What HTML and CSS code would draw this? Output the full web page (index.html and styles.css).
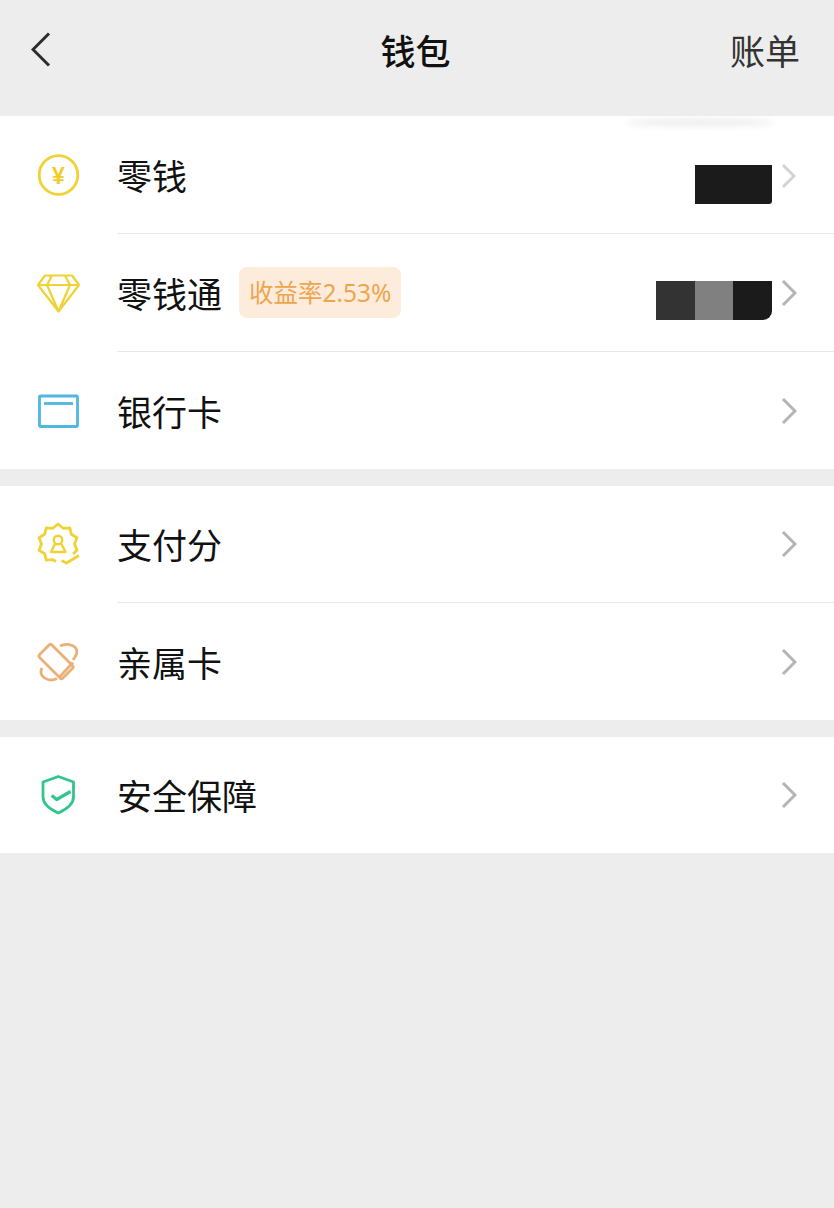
FILE: index.html
```html
<!DOCTYPE html>
<html lang="zh-CN">
<head>
    <meta charset="UTF-8">
    <meta name="viewport" content="width=device-width, initial-scale=1.0">
    <title>钱包</title>
    <link rel="stylesheet" href="styles.css">
</head>
<body>
    <header class="topbar">
        <svg class="back" width="20" height="36" viewBox="0 0 20 36"><path d="M18 1.500 2 17.500l16 16"/></svg>
        <h1 class="title">钱包</h1>
        <span class="bills">账单</span>
    </header>

    <section class="group group-wallet">
        <div class="smudge"></div>
        <div class="row">
            <svg class="icon" width="42" height="42" viewBox="0 0 42 42">
                <circle class="yellow" cx="21.500" cy="21" r="19.300"/>
                <text class="yen" x="21.500" y="29.500" text-anchor="middle">¥</text>
            </svg>
            <div class="row-body">
                <span class="label">零钱</span>
                <div class="mask mask-change">
                    <i class="cell c-dark"></i><i class="cell c-dark nick"></i>
                </div>
                <svg class="chevron faint" width="16" height="28" viewBox="0 0 16 28"><path d="M2 3l11 11L2 25"/></svg>
            </div>
        </div>
        <div class="row">
            <svg class="icon" width="42" height="42" viewBox="0 0 42 42">
                <path class="yellow fine" d="M8 3.500H35L42 13 21.500 39.500 1 13zM1 13H42M15 3.500 10 13 21.500 39.500 33 13 28 3.500"/>
            </svg>
            <div class="row-body">
                <span class="label">零钱通</span>
                <span class="badge">收益率2.53%</span>
                <div class="mask mask-fund">
                    <i class="cell c-mid"></i><i class="cell c-grey"></i><i class="cell c-dark fade"></i>
                </div>
                <svg class="chevron" width="16" height="28" viewBox="0 0 16 28"><path d="M2 2l12 12L2 26"/></svg>
            </div>
        </div>
        <div class="row">
            <svg class="icon" width="42" height="42" viewBox="0 0 42 42">
                <rect class="blue" x="2.500" y="6" width="38" height="30.500" rx="1"/>
                <path class="blue" d="M7 13.500H36"/>
            </svg>
            <div class="row-body no-line">
                <span class="label">银行卡</span>
                <svg class="chevron push" width="16" height="28" viewBox="0 0 16 28"><path d="M2 2l12 12L2 26"/></svg>
            </div>
        </div>
    </section>

    <section class="group group-pay">
        <div class="row">
            <svg class="icon icon-up" width="42" height="42" viewBox="0 0 42 42">
                <path class="yellow" d="M19 38.500 15.900 36.700 9.200 37.200 7.700 30.700 2 27.200 4.500 21 2 14.800 7.700 11.300 9.200 4.800 15.900 5.300 21 1 26.100 5.300 32.800 4.800 34.300 11.300 40 14.800 37.500 21 40 27.200 36 31"/>
                <path class="yellow" d="M24.500 37.500 29.500 40 42 32.500"/>
                <circle class="yellow thin" cx="21" cy="17" r="4.300"/>
                <path class="yellow thin" d="M18 21 14 29H28.500L24.500 21"/>
            </svg>
            <div class="row-body">
                <span class="label">支付分</span>
                <svg class="chevron push" width="16" height="28" viewBox="0 0 16 28"><path d="M2 2l12 12L2 26"/></svg>
            </div>
        </div>
        <div class="row">
            <svg class="icon" width="42" height="42" viewBox="0 0 42 42">
                <rect class="peach" x="2.500" y="11.750" width="33" height="17.500" rx="2" transform="rotate(45 19 20.500)"/>
                <path class="peach" d="M23 5C31 1 42 5 39.500 13 38.800 15 37.500 17 36 19M36 21.500 22 36.500M5 27C2 33 6 37 11 38.500 14 39.500 17 39 20 37.500"/>
            </svg>
            <div class="row-body no-line">
                <span class="label">亲属卡</span>
                <svg class="chevron push" width="16" height="28" viewBox="0 0 16 28"><path d="M2 2l12 12L2 26"/></svg>
            </div>
        </div>
    </section>

    <section class="group group-safe">
        <div class="row">
            <svg class="icon" width="42" height="42" viewBox="0 0 42 42">
                <path class="green" d="M21.300 2.500 36.500 8V23C36.500 30 29 35.500 21.300 39 13.500 35.500 6 30 6 23V8Z"/>
                <path class="green heavy" d="M14.700 21.500 19.700 25.500 33.500 17.500"/>
            </svg>
            <div class="row-body no-line">
                <span class="label">安全保障</span>
                <svg class="chevron push" width="16" height="28" viewBox="0 0 16 28"><path d="M2 2l12 12L2 26"/></svg>
            </div>
        </div>
    </section>
</body>
</html>
```

FILE: styles.css
```css
html, body {
    margin: 0;
    padding: 0;
}
body {
    height: 1208px;
    overflow: hidden;
    background-color: #ededed;
    color: #111;
    font-family: "Noto Sans CJK SC", "Noto Sans", sans-serif;
}

.topbar {
    height: 116px;
    box-sizing: border-box;
    padding: 0 34px 16px 31px;
    display: grid;
    grid-template-columns: 1fr auto 1fr;
    align-items: center;
}
.back {
    fill: none;
    stroke: #2c2c2c;
    stroke-width: 3;
}
.title {
    margin: 0;
    font-size: 35px;
    font-weight: 500;
    line-height: 50px;
}
.bills {
    justify-self: end;
    font-size: 35px;
    line-height: 50px;
    color: #333;
}

.group {
    position: relative;
    display: flex;
    flex-direction: column;
    background-color: #fff;
    margin-bottom: 17px;
}
.group-wallet { height: 353px; }
.group-wallet .row:last-child { flex: 0 0 117px; }
.group-pay { height: 234px; }
.group-safe { height: 116px; }

.smudge {
    position: absolute;
    top: 3px;
    left: 625px;
    width: 150px;
    height: 7px;
    background-color: #ececec;
    border-radius: 50%;
    filter: blur(3px);
}

.row {
    flex: 1;
    display: flex;
    align-items: center;
    padding-left: 37px;
}
.icon {
    flex: none;
    margin-right: 38px;
    overflow: visible;
}
.icon-up {
    margin-top: -2px;
}
.icon path, .icon circle, .icon rect {
    fill: none;
    stroke-width: 2.8;
    stroke-linejoin: round;
}
.icon .thin { stroke-width: 2.4; }
.icon .fine { stroke-width: 2.2; }
.icon .heavy { stroke-width: 3.2; }
.yellow { stroke: #f0d234; }
.blue { stroke: #4fb8de; }
.peach { stroke: #e9b177; }
.green { stroke: #31c78c; }
.yen {
    fill: #f0cc2c;
    font-family: "Liberation Sans", sans-serif;
    font-size: 23px;
    font-weight: 700;
}

.row-body {
    flex: 1;
    align-self: stretch;
    display: flex;
    align-items: center;
    padding-right: 37px;
    border-bottom: 1px solid #e8e8e8;
}
.no-line {
    border-bottom: none;
}
.label {
    font-size: 35px;
    line-height: 48px;
}
.badge {
    margin-left: 17px;
    padding: 0 10px;
    height: 51px;
    line-height: 51px;
    background-color: #fdecdc;
    border-radius: 8px;
    color: #eda64f;
    font-size: 24.5px;
    white-space: nowrap;
    font-family: "Noto Sans", "Noto Sans CJK SC", sans-serif;
}

.mask {
    margin-left: auto;
    margin-right: 9px;
    display: flex;
    height: 39px;
}
.mask-change { margin-top: 20px; }
.mask-fund { margin-top: 16px; }
.cell {
    display: block;
    width: 38.670px;
    height: 39px;
}
.c-dark { background-color: #1b1b1b; }
.c-mid { background-color: #333; }
.c-grey { background-color: #808080; }
.fade { border-bottom-right-radius: 9px; }
.nick { border-bottom-right-radius: 3px; }

.chevron {
    flex: none;
    fill: none;
    stroke: #b4b4b4;
    stroke-width: 3;
}
.push {
    margin-left: auto;
}
.faint {
    stroke: #d4d4d4;
    margin-bottom: -2px;
}
```
